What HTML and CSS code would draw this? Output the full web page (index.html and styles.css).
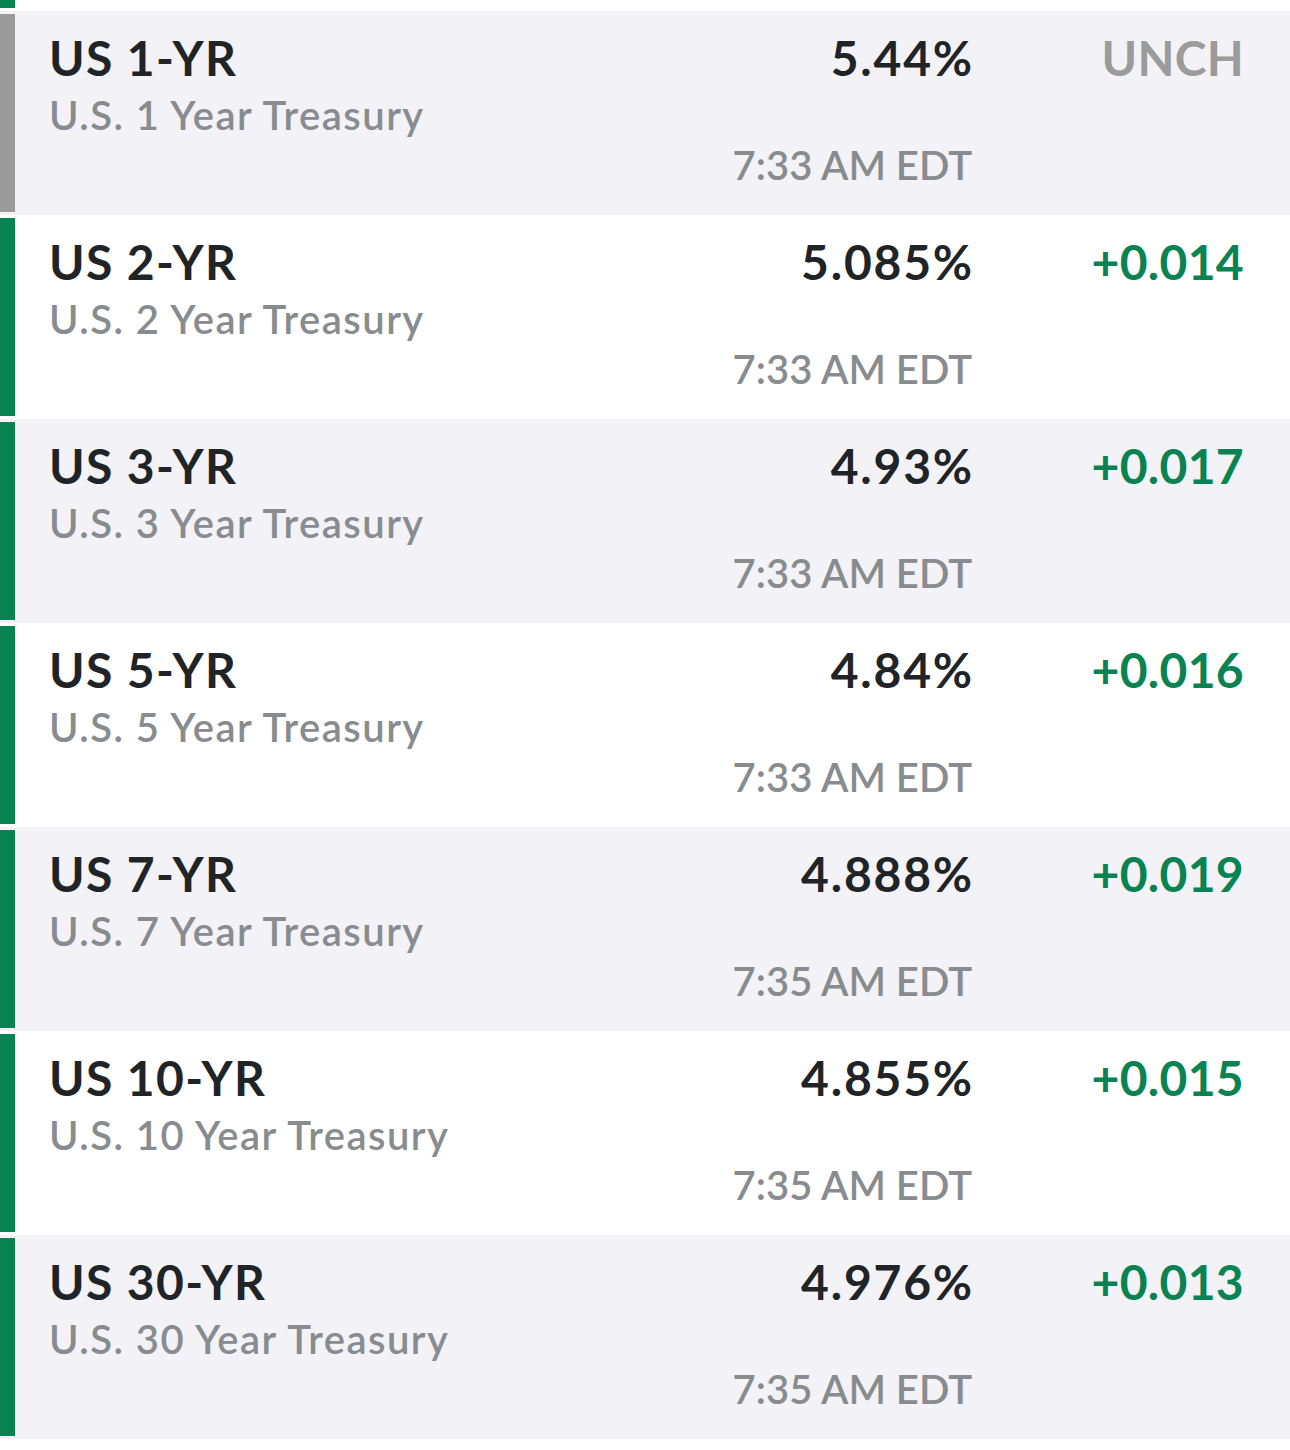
FILE: index.html
```html
<!DOCTYPE html>
<html>
<head>
<meta charset="utf-8">
<link rel="stylesheet" href="styles.css">
</head>
<body>
<div class="list">
  <div class="tail"><div class="bar up"></div></div>

  <div class="row alt">
    <div class="bar flat"></div>
    <div class="info"><div class="sym">US 1-YR</div><div class="name">U.S. 1 Year Treasury</div></div>
    <div class="quote"><div class="val">5.44%</div><div class="time">7:33 AM EDT</div></div>
    <div class="chg flat">UNCH</div>
  </div>

  <div class="row">
    <div class="bar up"></div>
    <div class="info"><div class="sym">US 2-YR</div><div class="name">U.S. 2 Year Treasury</div></div>
    <div class="quote"><div class="val">5.085%</div><div class="time">7:33 AM EDT</div></div>
    <div class="chg up">+0.014</div>
  </div>

  <div class="row alt">
    <div class="bar up"></div>
    <div class="info"><div class="sym">US 3-YR</div><div class="name">U.S. 3 Year Treasury</div></div>
    <div class="quote"><div class="val">4.93%</div><div class="time">7:33 AM EDT</div></div>
    <div class="chg up">+0.017</div>
  </div>

  <div class="row">
    <div class="bar up"></div>
    <div class="info"><div class="sym">US 5-YR</div><div class="name">U.S. 5 Year Treasury</div></div>
    <div class="quote"><div class="val">4.84%</div><div class="time">7:33 AM EDT</div></div>
    <div class="chg up">+0.016</div>
  </div>

  <div class="row alt">
    <div class="bar up"></div>
    <div class="info"><div class="sym">US 7-YR</div><div class="name">U.S. 7 Year Treasury</div></div>
    <div class="quote"><div class="val">4.888%</div><div class="time">7:35 AM EDT</div></div>
    <div class="chg up">+0.019</div>
  </div>

  <div class="row">
    <div class="bar up"></div>
    <div class="info"><div class="sym">US 10-YR</div><div class="name">U.S. 10 Year Treasury</div></div>
    <div class="quote"><div class="val">4.855%</div><div class="time">7:35 AM EDT</div></div>
    <div class="chg up">+0.015</div>
  </div>

  <div class="row alt">
    <div class="bar up"></div>
    <div class="info"><div class="sym">US 30-YR</div><div class="name">U.S. 30 Year Treasury</div></div>
    <div class="quote"><div class="val">4.976%</div><div class="time">7:35 AM EDT</div></div>
    <div class="chg up">+0.013</div>
  </div>
</div>
</body>
</html>
```

FILE: styles.css
```css
html, body {
  margin: 0;
  padding: 0;
  background: #ffffff;
}
body {
  font-family: "Lato", "Liberation Sans", sans-serif;
  width: 1290px;
  height: 1450px;
  overflow: hidden;
}
.list {
  display: flex;
  flex-direction: column;
}
.tail {
  height: 11px;
  display: flex;
  background: #ffffff;
}
.tail .bar {
  margin: 0;
  height: 8px;
}
.row {
  display: flex;
  height: 204px;
  background: #ffffff;
}
.row.alt {
  background: #f2f2f7;
}
.bar {
  width: 15px;
  margin: 3px 0;
  flex: none;
}
.bar.up { background: #0a8352; }
.bar.flat { background: #9b9b9b; }
.info {
  flex: 1;
  padding: 19px 0 0 34px;
}
.sym {
  font-size: 48px;
  line-height: 56px;
  font-weight: 700;
  color: #212427;
  letter-spacing: 1.4px;
}
.name {
  font-size: 40px;
  line-height: 48px;
  font-weight: 600;
  color: #898c8f;
  margin-top: 5px;
  letter-spacing: 1.45px;
}
.quote {
  padding-top: 19px;
  text-align: right;
}
.val {
  font-size: 48px;
  line-height: 56px;
  font-weight: 700;
  color: #212427;
  letter-spacing: 1.8px;
  margin-right: -2px;
}
.time {
  font-size: 40px;
  line-height: 48px;
  font-weight: 600;
  color: #898c8f;
  margin-top: 55px;
}
.chg {
  width: 318px;
  padding: 19px 46px 0 0;
  box-sizing: border-box;
  text-align: right;
  font-size: 48px;
  line-height: 56px;
  font-weight: 700;
  letter-spacing: 0.3px;
}
.chg.up { color: #0a8352; }
.chg.flat { color: #9b9b9b; }
```
